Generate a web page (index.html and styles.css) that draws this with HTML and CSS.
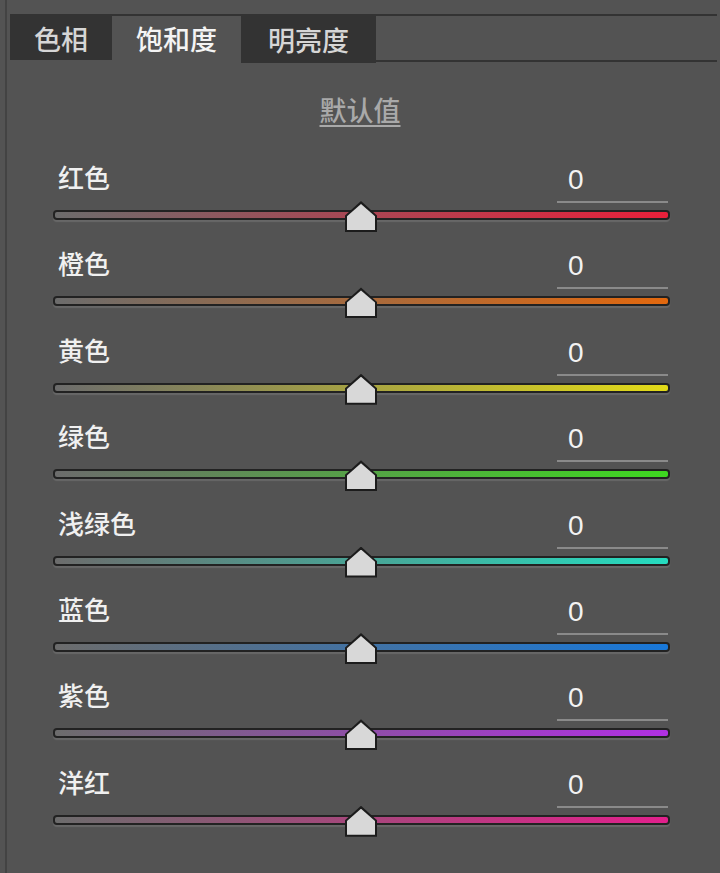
FILE: index.html
```html
<!DOCTYPE html>
<html>
<head>
    <title>饱和度</title>
    <link rel="stylesheet" href="styles.css">
</head>
<body>
    <div class="panel">
        <div class="tabs">
            <div class="tab">色相</div>
            <div class="tab active">饱和度</div>
            <div class="tab">明亮度</div>
            <div class="tab-fill"></div>
        </div>

        <div class="reset"><span>默认值</span></div>

        <div class="rows">
            <div class="row">
                <div class="row-head"><span class="label">红色</span><span class="value">0</span></div>
                <div class="track"><div class="bar red"></div><span class="thumb"></span></div>
            </div>
            <div class="row">
                <div class="row-head"><span class="label">橙色</span><span class="value">0</span></div>
                <div class="track"><div class="bar orange"></div><span class="thumb"></span></div>
            </div>
            <div class="row">
                <div class="row-head"><span class="label">黄色</span><span class="value">0</span></div>
                <div class="track"><div class="bar yellow"></div><span class="thumb"></span></div>
            </div>
            <div class="row">
                <div class="row-head"><span class="label">绿色</span><span class="value">0</span></div>
                <div class="track"><div class="bar green"></div><span class="thumb"></span></div>
            </div>
            <div class="row">
                <div class="row-head"><span class="label">浅绿色</span><span class="value">0</span></div>
                <div class="track"><div class="bar aqua"></div><span class="thumb"></span></div>
            </div>
            <div class="row">
                <div class="row-head"><span class="label">蓝色</span><span class="value">0</span></div>
                <div class="track"><div class="bar blue"></div><span class="thumb"></span></div>
            </div>
            <div class="row">
                <div class="row-head"><span class="label">紫色</span><span class="value">0</span></div>
                <div class="track"><div class="bar purple"></div><span class="thumb"></span></div>
            </div>
            <div class="row">
                <div class="row-head"><span class="label">洋红</span><span class="value">0</span></div>
                <div class="track"><div class="bar magenta"></div><span class="thumb"></span></div>
            </div>
        </div>
    </div>
</body>
</html>
```

FILE: styles.css
```css
body {
    margin: 0;
    background-color: #535353;
    font-family: "Noto Sans CJK SC", "Noto Sans", sans-serif;
    color: #f0f0f0;
}
.panel {
    margin-left: 5px;
    border-left: 2px solid #434343;
    padding-left: 3px;
    padding-top: 14px;
    height: 859px;
}
.tabs {
    display: flex;
    align-items: flex-start;
    border-top: 2px solid #333333;
    margin-right: 3px;
}
.tab {
    height: 45px;
    display: flex;
    align-items: center;
    justify-content: center;
    background-color: #333333;
    color: #d6d6d6;
    font-size: 27px;
    font-weight: 500;
}
.tab:nth-child(1) {
    width: 102px;
    height: 44px;
}
.tab:nth-child(2) {
    width: 129px;
}
.tab:nth-child(3) {
    width: 135px;
    height: 47px;
}
.tab.active {
    background-color: #535353;
    color: #f4f4f4;
}
.tab-fill {
    flex: 1;
    height: 44px;
    border-bottom: 2px solid #333333;
}
.reset {
    text-align: center;
    margin-top: 30px;
    margin-bottom: 32px;
    padding-right: 10px;
}
.reset span {
    font-size: 27px;
    font-weight: 500;
    line-height: 34px;
    color: #a9a9a9;
    text-decoration: underline;
    text-underline-offset: 4px;
}
.rows {
    padding-left: 43px;
    width: 617px;
}
.row {
    height: 86.4px;
}
.row-head {
    display: flex;
    justify-content: space-between;
    align-items: flex-end;
    height: 44px;
}
.label {
    font-size: 26px;
    font-weight: 500;
    line-height: 30px;
    margin-left: 5px;
    margin-bottom: 11px;
}
.value {
    width: 100px;
    margin-right: 2px;
    padding-left: 11px;
    padding-bottom: 8px;
    font-family: "Liberation Sans", sans-serif;
    font-size: 28px;
    line-height: 26px;
    color: #f2f2f2;
    border-bottom: 2px solid #8a8a8a;
}
.track {
    position: relative;
    margin-top: 7px;
    height: 10px;
    box-sizing: border-box;
    padding: 2px;
    background-color: #222222;
    border-radius: 4px;
    box-shadow: 0 2px 1px rgba(255, 255, 255, 0.12);
}
.bar {
    height: 6px;
    border-radius: 2px;
}
.red { background: linear-gradient(to right, #6c6c6c, #e8203a); }
.orange { background: linear-gradient(to right, #6c6c6c, #e2680e); }
.yellow { background: linear-gradient(to right, #6c6c6c, #e2da18); }
.green { background: linear-gradient(to right, #6c6c6c, #3ed820); }
.aqua { background: linear-gradient(to right, #6c6c6c, #26dcc0); }
.blue { background: linear-gradient(to right, #6c6c6c, #1878da); }
.purple { background: linear-gradient(to right, #6c6c6c, #b030e2); }
.magenta { background: linear-gradient(to right, #6c6c6c, #e2208c); }
.thumb {
    position: absolute;
    left: 292px;
    top: -9px;
    width: 32px;
    height: 31px;
    background-color: #1c1c1c;
    clip-path: polygon(50% 0, 100% 47%, 100% 100%, 0 100%, 0 47%);
}
.thumb::after {
    content: "";
    position: absolute;
    left: 2px;
    top: 3px;
    right: 2px;
    bottom: 2px;
    background-color: #d8d8d8;
    clip-path: polygon(50% 0, 100% 47%, 100% 100%, 0 100%, 0 47%);
}
```
